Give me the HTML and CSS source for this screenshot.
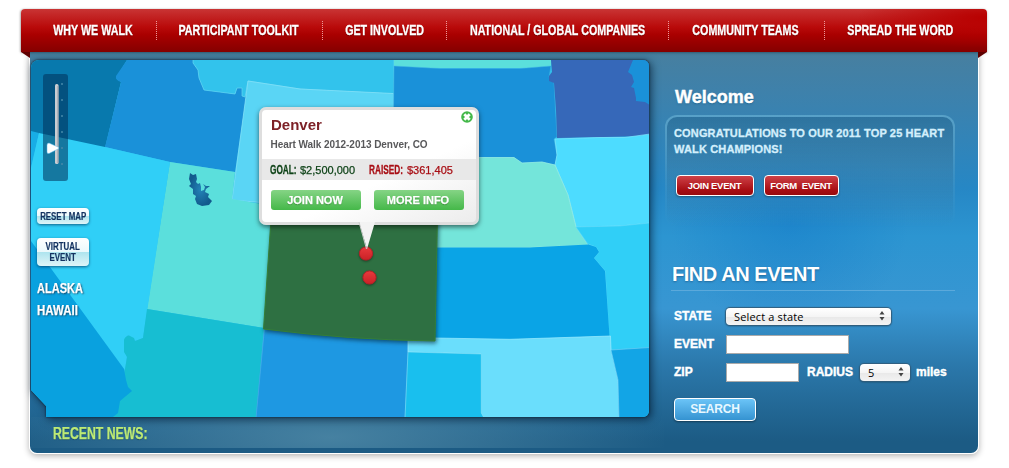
FILE: index.html
```html
<!DOCTYPE html>
<html lang="en">
<head>
<meta charset="utf-8">
<title>Heart Walk</title>
<link rel="stylesheet" href="styles.css">
</head>
<body>
<nav class="nav">
  <a class="nav-item first"><span>WHY WE WALK</span></a>
  <a class="nav-item toolkit"><span>PARTICIPANT TOOLKIT</span></a>
  <a class="nav-item involved"><span>GET INVOLVED</span></a>
  <a class="nav-item companies"><span>NATIONAL / GLOBAL COMPANIES</span></a>
  <a class="nav-item teams"><span>COMMUNITY TEAMS</span></a>
  <a class="nav-item last"><span>SPREAD THE WORD</span></a>
</nav>
<main class="panel">
  <section class="left">
    <div class="map">
      <svg class="states" viewBox="31 60 618 357" width="618" height="357">
        <defs>
          <radialGradient id="lake"><stop offset="0" stop-color="#2383b8"/><stop offset="1" stop-color="#125a8d"/></radialGradient>
          <linearGradient id="pin" x2="0" y2="1"><stop offset="0" stop-color="#e93a3d"/><stop offset="1" stop-color="#c92126"/></linearGradient>
        </defs>
        <path fill="#30bfec" d="M31 60H649V417H31Z"/>
        <path fill="#0879ad" d="M31 60H127L116 78 121 82 105 148 31 132Z"/>
        <path fill="#1a91d9" d="M127 60 116 76Q115 80 121 82L105 147 170 162 235 172 246 97 242 88H237L235 94 204 90 199 78 198 70 193 63V60Z"/>
        <path fill="#32c3ec" stroke="#66d6f2" stroke-width=".7" d="M193 59V63L198 70 199 78 204 90 235 94 237 88H242V96L245 97 248 81 300 89 394 94V59Z"/>
        <path fill="#5ad5f5" stroke="#8ae3f8" stroke-width=".7" d="M248 81 300 89 393.500 93.500V214L232 200Z"/>
        <path fill="#5bdfdc" d="M170 162 235 172 232 199 273 206 264 328 147 309Z"/>
        <path fill="#18ade6" d="M31 131 39 133 31 168Z"/>
        <path fill="#30cff7" d="M39 133 105 147 170 162 143 338 136 341 128 335 124 340 127 357 125 370 31 242V168Z"/>
        <path fill="#17bed2" d="M147 309 264 328 256 417H113L125 369 127 357 124 352V340Q125 336 129 335.500L134 338 135 341 143 338Z"/>
        <path fill="#09a1df" d="M31 241 124 369 126 380 128 387 132 391 120 401 118 413 113 417H31Z"/>
        <path fill="#1e98e2" stroke="#48a9e8" stroke-width=".7" d="M264.500 328 408.500 340 405 418H256Z"/>
        <path fill="#5bdfdc" d="M394 60H551V68H394Z"/>
        <path fill="#1a91d9" stroke="#42b7e5" stroke-width=".5" d="M394 66 440 68.500H520L551 66 549 77 554 83 557 137 554 139 557 155 555 165 542 162 522 163 514 157.500H393Z"/>
        <path fill="#3668b9" d="M551 60H650V136L557 138 556 110 554 83 549 81V76L552 72Z"/>
        <path fill="#1a91d9" d="M633 60H650V105L645 102 636 101V98L634 88 631 87 634 82 632 75 628 72Z"/>
        <path fill="#4ddcff" stroke="#82e5fc" stroke-width=".7" d="M555 139 600 137.500H625L650 134V223L620 226 576 227 568 195 555 165 557 155Z"/>
        <path fill="#74e5da" stroke="#9aeee2" stroke-width=".7" d="M393 157.500H514L522 163 542 162 555 165 568 195 576 227 588 245 530 247.500H393Z"/>
        <path fill="#30cff7" stroke="#59dafa" stroke-width=".7" d="M576 227 620 226 650 223V348L611 350 609 336 605 271 594 258 599 252 596 247 588 244Z"/>
        <path fill="#0aa4e6" d="M430 247.500H530L588 244.500 596 247 599 252 594 258 605 271 609.500 336 510 339.500 430 339Z"/>
        <path fill="#6adefc" stroke="#9debfd" stroke-width=".7" d="M408 338H435L510 339.300 610.500 336 611 350 618 380 619 418H484L481 413V354L408 352Z"/>
        <path fill="#19bfee" stroke="#7fdff7" stroke-width=".6" d="M408 352 481.300 354V413L484 418H405Z"/>
        <path fill="#12a5e6" stroke="#68cdf4" stroke-width=".7" d="M611 350 650 347.500V418H619L618 380Z"/>
        <path class="colorado" fill="#2e7042" stroke="#367f36" stroke-width="1" d="M272 205 437.500 213 435 341Q350 340 263.500 329Z"/>
        <path fill="url(#lake)" d="M190 173 193 175 196 174 197 179 196 182 198 184 200 183 201 187 201 191 204 190 205 187 203 184 206 186 210 186 206 189 205 192 209 194 208 197 212 201 209 205 202 206 197 204 195 199 196 196 193 194 193 189 189 186 191 184 189 179Z"/>
        <g class="pins" fill="url(#pin)" stroke="#b52028"><circle cx="366" cy="253.500" r="6.600"/><circle cx="369.500" cy="277.500" r="6.600"/></g>
      </svg>
      <div class="zoomer">
        <svg width="25" height="107">
          <rect x="12" y="10" width="3.500" height="80" rx="1.500" fill="#c9ccd2"/>
          <path d="M15 12V89" stroke="#9297a3" stroke-width="1"/>
          <g fill="#4688a8"><circle cx="19" cy="10" r="1"/><circle cx="19" cy="26" r="1"/><circle cx="19" cy="42" r="1"/><circle cx="19" cy="58" r="1"/><circle cx="19" cy="74" r="1"/><circle cx="19" cy="90" r="1"/></g>
          <path d="M4 71Q4 69 6 69L15 73Q16.500 74 15 75L6 79.500Q4 80 4 78Z" fill="#fff" stroke="#5ab9ea" stroke-width=".5"/>
        </svg>
      </div>
      <div class="map-links">
        <a class="chip reset"><span>RESET MAP</span></a>
        <a class="chip virtual"><span>VIRTUAL<br>EVENT</span></a>
        <a class="place alaska">ALASKA</a>
        <a class="place hawaii">HAWAII</a>
      </div>
      <div class="popup">
        <svg class="close" width="12" height="12" viewBox="0 0 12 12"><circle cx="6" cy="6" r="5.800" fill="#43b849"/><path d="M3.300 3.300 8.700 8.700M8.700 3.300 3.300 8.700" stroke="#fff" stroke-width="2.800"/></svg>
        <h2>Denver</h2>
        <p class="walk">Heart Walk 2012-2013 Denver, CO</p>
        <div class="totals"><span class="goal"><b>GOAL:</b></span><span class="goal-n">$2,500,000</span><span class="raised"><b>RAISED:</b></span><span class="raised-n">$361,405</span></div>
        <div class="actions"><a>JOIN NOW</a><a>MORE INFO</a></div>
        <svg class="tail" width="18" height="30" viewBox="0 0 18 30"><path d="M1 0H17L9 27Z" fill="#f3f3f3"/><path d="M1 0 8.500 27" stroke="#ccc" fill="none"/></svg>
      </div>
    </div>
    <div class="news"><span>RECENT NEWS:</span></div>
  </section>
  <aside class="side">
    <h1>Welcome</h1>
    <div class="card">
      <p>CONGRATULATIONS TO OUR 2011 TOP 25 HEART<br>WALK CHAMPIONS!</p>
      <div class="red-row"><a class="red join">JOIN EVENT</a><a class="red form">FORM&nbsp; EVENT</a></div>
    </div>
    <h3>FIND AN EVENT</h3>
    <form class="finder">
      <div class="row"><label class="lead">STATE</label><span class="select state">Select a state<svg width="6" height="10" viewBox="0 0 6 10"><path d="M3 0 5.500 3.500H.5ZM3 9.500 5.500 6H.5Z" fill="#444"/></svg></span></div>
      <div class="row"><label class="lead">EVENT</label><input class="event" type="text"></div>
      <div class="row"><label class="lead">ZIP</label><input class="zip" type="text"><label class="radius">RADIUS</label><span class="select five">5<svg width="6" height="10" viewBox="0 0 6 10"><path d="M3 0 5.500 3.500H.5ZM3 9.500 5.500 6H.5Z" fill="#444"/></svg></span><label class="miles">miles</label></div>
      <a class="search">SEARCH</a>
    </form>
  </aside>
</main>
</body>
</html>
```
FILE: styles.css
```css
* { box-sizing: border-box; }
body { margin: 0; padding-top: 9px; width: 1009px; height: 468px; overflow: hidden; background: #fff; font-family: "Liberation Sans", Arial, sans-serif; }
h1, h2, h3, p { margin: 0; }

.nav { position: relative; z-index: 2; display: flex; width: 966px; height: 43px; margin-left: 21px; border-radius: 4px 4px 0 0; background: radial-gradient(ellipse 130px 30px at 100% 20%, #b80000, transparent), linear-gradient(#c93434, #b90a0a 42%, #a90000 60%, #840000); box-shadow: -1px 0 2px rgba(0,0,0,.2), 0 1px 3px rgba(0,0,0,.25); }
.nav::before, .nav::after { content: ""; position: absolute; top: 43px; width: 9px; height: 6px; background: #5e0000; }
.nav::before { left: 0; clip-path: polygon(0 0, 100% 0, 100% 100%); }
.nav::after { right: 0; clip-path: polygon(0 0, 100% 0, 0 100%); }
.nav-item { display: flex; justify-content: center; align-items: center; height: 43px; padding-bottom: 1px; color: #fff; font: bold 14px "Liberation Sans", sans-serif; white-space: nowrap; text-shadow: 0 1px 1px rgba(70,0,0,.6); }
.nav-item + .nav-item { background: repeating-linear-gradient(#e99 0 1px, transparent 1px 2px) 0 12px / 1px 19px no-repeat; }
.nav-item span { transform: scaleX(.765); -webkit-text-stroke: .3px #fff; }
.first { width: 135px; padding-left: 9px; }
.toolkit { width: 166px; }
.involved { width: 124px; padding-left: 2px; }
.companies { width: 222px; padding-left: 2px; }
.teams { width: 156px; padding-right: 1px; }
.last { width: 163px; padding-right: 11px; }

.panel { display: flex; width: 950px; height: 402px; margin-left: 29px; border: 1px solid #fff; border-top: 0; border-radius: 0 0 8px 8px; background: radial-gradient(ellipse 120px 110px at 760px 170px, rgba(0,105,195,.3), transparent), linear-gradient(#477f9f, #3e81ab 10%, #2687c5 34%, #2c95d1 46%, #3896d2 64%, #2b78ab 78%, #1c5b84 97%); box-shadow: 0 2px 6px rgba(0,0,0,.3); }
.left { width: 634px; padding: 8px 0 0 1px; }
.map { position: relative; width: 618px; height: 357px; filter: drop-shadow(0 0 1px #123) drop-shadow(2px 2px 4px rgba(0,20,40,.65)); }
.states { display: block; border-radius: 8px 6px 6px 0; clip-path: polygon(0 0, 100% 0, 100% 100%, 15px 100%, 15px 346px, 0 330px); }
.colorado { filter: drop-shadow(1px 2px 2px rgba(0,30,50,.6)); }
.pins { filter: drop-shadow(0 1px 1px rgba(0,0,0,.4)); }
.zoomer { position: absolute; left: 12px; top: 14px; width: 25px; height: 107px; border-radius: 3px; background: rgba(0,50,90,.55); }
.map-links { position: absolute; left: 6px; top: 148px; display: flex; flex-direction: column; align-items: flex-start; }
.chip { display: flex; align-items: center; justify-content: center; width: 52px; border-radius: 4px; background: linear-gradient(#fff, #eaf9fc 50%, #aee4ee 51%, #dff5f8); box-shadow: 0 1px 3px rgba(0,40,80,.65); color: #12315f; font: bold 10px/11px "Liberation Sans", sans-serif; text-align: center; white-space: nowrap; }
.chip span { transform: scaleX(.79); -webkit-text-stroke: .2px #12315f; }
.reset { height: 16px; }
.virtual { height: 28px; margin-top: 14px; }
.place { color: #fff; font: bold 14px/22px "Liberation Sans", sans-serif; -webkit-text-stroke: .25px #fff; text-shadow: 1px 1px 2px #123c5c; transform: scaleX(.79); transform-origin: left; }
.alaska { margin-top: 11px; }
.hawaii { transform: scaleX(.82); }

.popup { position: absolute; left: 227.500px; top: 47px; width: 220.500px; height: 118px; border: 3px solid #dedede; border-radius: 7px; background: linear-gradient(155deg, #fff 60%, #ececec); box-shadow: 0 2px 5px rgba(0,0,0,.55); }
.close { position: absolute; right: 3px; top: 1px; }
.popup h2 { padding: 6px 0 0 9.500px; color: #7d2127; font-size: 15px; line-height: 17px; }
.walk { padding: 6px 0 0 9px; color: #58585a; font-weight: bold; font-size: 10px; line-height: 12px; letter-spacing: -.05px; white-space: nowrap; }
.totals { display: flex; align-items: center; height: 21px; margin-top: 8px; padding-left: 8px; background: #e8e8e8; font-size: 11px; white-space: nowrap; }
.totals b { display: inline-block; font-size: 12.500px; transform: scaleX(.66); transform-origin: left; -webkit-text-stroke: .3px currentColor; }
.goal, .goal-n { color: #0f4318; }
.raised, .raised-n { color: #a80e14; }
.goal-n, .raised-n { -webkit-text-stroke: .25px currentColor; }
.goal { width: 30.500px; }
.goal-n { width: 69px; }
.raised { width: 38px; }
.goal, .goal-n, .raised { flex: none; }
.actions { display: flex; gap: 13px; padding: 10px 0 0 9px; }
.actions a { width: 90px; height: 20px; border-radius: 3px; background: linear-gradient(#85d485, #45b849); color: #fff; font: bold 11px/20px "Liberation Sans", sans-serif; text-align: center; text-indent: -1px; -webkit-text-stroke: .25px #fff; text-shadow: 0 1px 1px #398b3a; }
.tail { position: absolute; left: 96px; top: 112px; }

.news { height: 31px; padding: 7px 0 0 22px; background: radial-gradient(ellipse 340px 80px at 300px 20px, #4681a1, rgba(70,129,161,0)); color: #bdea75; font: bold 16px/20px "Liberation Sans", sans-serif; text-shadow: 0 1px 1px #184867; }
.news span { display: inline-block; transform: scaleX(.765); transform-origin: left; -webkit-text-stroke: .25px #bdea75; }

.side { width: 314px; padding-top: 35px; color: #fff; }
.side h1 { padding-left: 11px; font-size: 18px; line-height: 20px; -webkit-text-stroke: .4px #fff; text-shadow: 0 1px 2px #23658f; }
.card { width: 290px; height: 112px; margin: 8px 0 0 1px; padding: 10px 0 0 8px; border: 2px solid transparent; border-radius: 12px; background: linear-gradient(rgba(23,91,137,.65), rgba(23,91,137,.25) 50%, transparent) padding-box, linear-gradient(#58a1c8, rgba(88,161,200,.4) 50%, transparent) border-box; color: #d3effc; font-weight: bold; font-size: 11px; line-height: 16px; white-space: nowrap; }
.card p { margin: -2px 0 0 -1px; letter-spacing: .15px; -webkit-text-stroke: .3px #d3effc; }
.red-row { display: flex; gap: 10px; margin: 18px 0 0 1px; }
.red { height: 21px; border: 1px solid #fff; border-radius: 4px; background: linear-gradient(#ce4148, #a70d12 75%, #980a0e); color: #fff; font-weight: bold; font-size: 9.500px; line-height: 19px; text-align: center; text-indent: -1px; letter-spacing: -.3px; box-shadow: 0 1px 2px rgba(0,0,0,.35); }
.join { width: 78px; }
.form { width: 75px; }
.side h3 { width: 284px; height: 28px; margin: 36px 0 0 7px; padding-left: 1px; border-bottom: 1px solid #5ba9db; font-size: 20px; line-height: 22px; letter-spacing: -.45px; text-shadow: 0 1px 2px #236b9d; }
.finder { margin: 0 0 0 10px; padding-top: 15px; font-weight: bold; font-size: 12px; }
.row { display: flex; align-items: center; height: 20px; margin-bottom: 8px; }
.row > * { flex: none; }
.row label { -webkit-text-stroke: .4px #fff; }
.lead { width: 52px; }
.select { display: flex; align-items: center; justify-content: space-between; height: 17px; padding: 0 6px 0 8px; border-radius: 4px; background: linear-gradient(#fff, #f5f5f5 50%, #e8e8e8 51%, #f3f3f3); box-shadow: 0 0 1px 1px #315e7d, 0 1px 2px rgba(0,0,0,.4); color: #000; font: 11px/15px "Open Sans", sans-serif; letter-spacing: .15px; }
.state { width: 165px; }
input { height: 19px; padding: 0 4px; border: 1px solid #aaa; border-radius: 0; background: #fff; }
.event { width: 123px; }
.zip { width: 73px; }
.radius { width: 61px; padding-left: 8px; }
.five { width: 50px; }
.miles { margin-left: 6px; }
.search { display: block; width: 82px; height: 23px; margin-top: 16px; border: 1px solid #fff; border-radius: 4px; background: linear-gradient(#6bc4f7, #3593d1); color: #e8f8ff; font: bold 12px/21px "Liberation Sans", sans-serif; letter-spacing: -.2px; text-align: center; box-shadow: 0 1px 2px rgba(0,0,0,.4); }
```
